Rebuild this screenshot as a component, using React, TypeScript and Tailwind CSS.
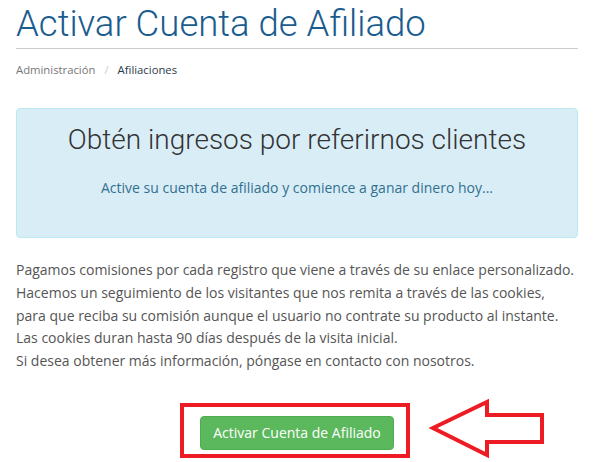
export default function App() {
  return (
    <div className="relative h-[462px] w-[602px] overflow-hidden bg-white">
      <div className="w-[578px] pl-4">
        <h1 className="border-b border-[#cccccc] pb-[4px] pt-[4px] font-['Roboto',sans-serif] text-[36.5px] font-light leading-[40px] whitespace-nowrap text-[#1a5c8e]">
          Activar Cuenta de Afiliado
        </h1>

        <div className="mt-[13px] flex items-center font-['Open_Sans',sans-serif] text-[11.3px] leading-[16px]">
          <span className="text-[#777777]">Administración</span>
          <span className="px-[9px] text-[#cccccc]">/</span>
          <span className="text-[#2b3a4a]">Afiliaciones</span>
        </div>

        <div className="mt-[30px] flex h-[130px] flex-col items-center rounded-[4px] border border-[#bce8f1] bg-[#d9edf7]">
          <h2 className="mt-[14px] whitespace-nowrap font-['Roboto',sans-serif] text-[28px] font-light leading-[34px] text-[#333333]">
            Obtén ingresos por referirnos clientes
          </h2>
          <p className="mt-[21px] whitespace-nowrap font-['Open_Sans',sans-serif] text-[14px] leading-[20px] text-[#31708f]">
            Active su cuenta de afiliado y comience a ganar dinero hoy...
          </p>
        </div>

        <div className="mt-[21px] whitespace-nowrap font-['Open_Sans',sans-serif] text-[14px] leading-[22.75px] text-[#555555]">
          <p>Pagamos comisiones por cada registro que viene a través de su enlace personalizado.</p>
          <p>Hacemos un seguimiento de los visitantes que nos remita a través de las cookies,</p>
          <p>para que reciba su comisión aunque el usuario no contrate su producto al instante.</p>
          <p>Las cookies duran hasta 90 días después de la visita inicial.</p>
          <p>Si desea obtener más información, póngase en contacto con nosotros.</p>
        </div>

        <div className="mt-[43px] flex justify-center">
          <button className="h-[34px] rounded-[4px] border border-[#4cae4c] bg-[#5cb85c] px-3 font-['Open_Sans',sans-serif] text-[14px] text-white">
            Activar Cuenta de Afiliado
          </button>
        </div>
      </div>

      <div className="absolute left-[180px] top-[403px] h-[55px] w-[230px] border-4 border-[#ed1c24]" />

      <svg className="absolute left-0 top-0" width="602" height="462" viewBox="0 0 602 462">
        <polygon
          points="433,428 487,402 487,415 542,415 542,442 487,442 487,455"
          fill="none"
          stroke="#ed1c24"
          strokeWidth="4"
          strokeLinejoin="miter"
        />
      </svg>
    </div>
  );
}
